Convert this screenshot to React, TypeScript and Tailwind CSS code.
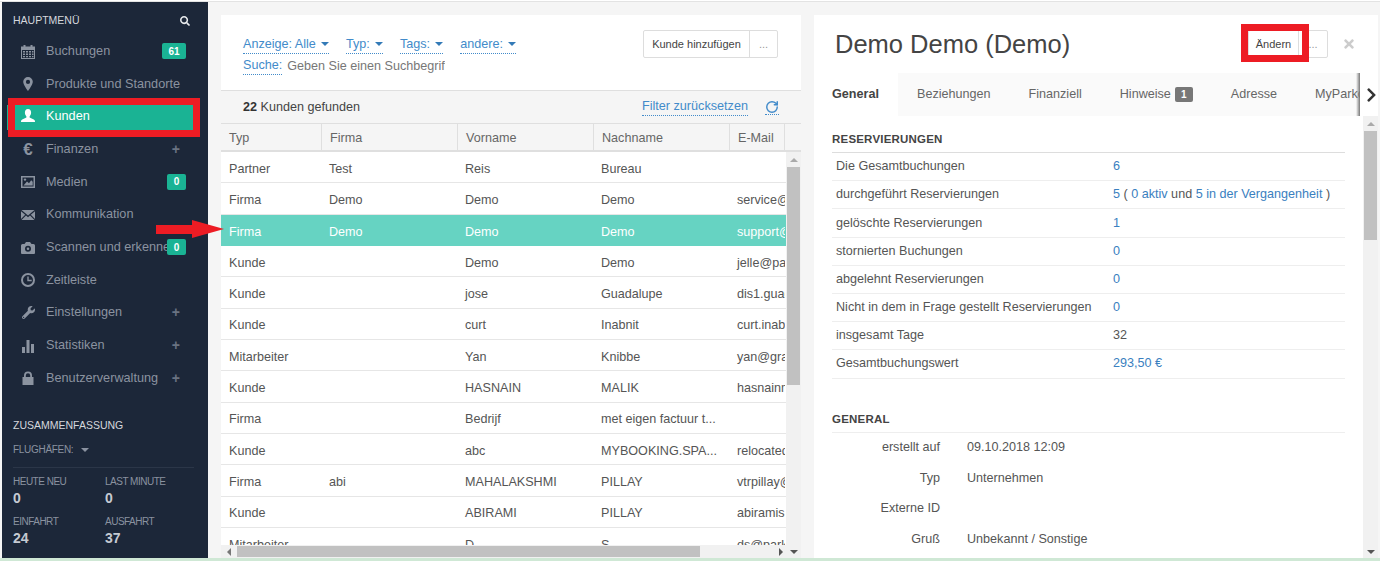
import React from "react";
import { FaWrench, FaSearch, FaChevronRight, FaTimes } from "react-icons/fa";
import { RotateCw } from "lucide-react";

const Ico = ({ children }: { children: React.ReactNode }) => (
  <svg viewBox="0 0 14 14" className="w-[14px] h-[14px]" fill="currentColor">{children}</svg>
);

const Calendar = () => (
  <Ico>
    <path fillRule="evenodd" d="M0 1.5h2.5V0h2v1.5h5V0h2v1.5H14V14H0V1.5ZM1 5v8h12V5H1Z" />
    <path d="M2 6h2v1.5H2zM5 6h2v1.5H5zM8 6h2v1.5H8zM11 6h1.5v1.5H11zM2 8.5h2V10H2zM5 8.5h2V10H5zM8 8.5h2V10H8zM11 8.5h1.5V10H11zM2 11h2v1.3H2zM5 11h2v1.3H5zM8 11h2v1.3H8zM11 11h1.5v1.3H11z" />
  </Ico>
);
const Marker = () => (
  <Ico>
    <path fillRule="evenodd" d="M7 0a4.8 4.8 0 0 1 4.8 4.8C11.8 8 7 14 7 14S2.2 8 2.2 4.8A4.8 4.8 0 0 1 7 0Zm0 2.8a2.1 2.1 0 1 0 0 4.2 2.1 2.1 0 0 0 0-4.2Z" />
  </Ico>
);
const UserIco = () => (
  <Ico>
    <path d="M7 0C4.9 0 3.9 1.6 3.9 3.6c0 1.6.7 3 1.5 3.8v1.2L1.2 10.4C.4 10.8 0 11.5 0 12.4V13h14v-.6c0-.9-.4-1.6-1.2-2L8.6 8.6V7.4c.8-.8 1.5-2.2 1.5-3.8C10.100 1.600 9.100 0 7 0Z" />
  </Ico>
);
const Picture = () => (
  <Ico>
    <path fillRule="evenodd" d="M0 1h14v12H0V1Zm1.500 1.500v9h11v-9h-11Z" />
    <path d="M2.500 10.500 6 6.500l2 1.800 2.200-3 1.500 1.400v3.800z" />
    <circle cx="4" cy="4.600" r="1.200" />
  </Ico>
);
const Mail = () => (
  <Ico>
    <path d="M.5 2h13L7 7.500.5 2ZM0 3.200l4.200 3.600L0 11V3.200ZM14 3.200V11L9.800 6.800 14 3.200ZM5 7.500l2 1.700 2-1.700L13.500 12H.5L5 7.500Z" />
  </Ico>
);
const Camera = () => (
  <Ico>
    <path fillRule="evenodd" d="M1.500 3h2L5 1h4l1.500 2h2A1.500 1.500 0 0 1 14 4.500V12a1 1 0 0 1-1 1H1a1 1 0 0 1-1-1V4.500A1.500 1.500 0 0 1 1.500 3ZM7 4.800a3 3 0 1 0 0 6 3 3 0 0 0 0-6Zm0 1.700a1.300 1.300 0 1 1 0 2.600 1.300 1.300 0 0 1 0-2.600Z" />
  </Ico>
);
const Clock = () => (
  <Ico>
    <path fillRule="evenodd" d="M7 0a7 7 0 1 1 0 14A7 7 0 0 1 7 0Zm0 2a5 5 0 1 0 0 10A5 5 0 0 0 7 2Z" />
    <path d="M6.300 3.500h1.400v3.300h3v1.400H6.300z" />
  </Ico>
);
const Bars = () => (
  <Ico>
    <rect x="1" y="8" width="3" height="6" />
    <rect x="5.500" y="1" width="3" height="13" />
    <rect x="10" y="5" width="3" height="9" />
  </Ico>
);
const Lock = () => (
  <Ico>
    <path fillRule="evenodd" d="M3 6V4.500a4 4 0 0 1 8 0V6h1.500v8h-11V6H3Zm1.800 0h4.400V4.500a2.200 2.200 0 0 0-4.400 0V6Z" />
  </Ico>
);
const Euro = () => <span className="text-[17px] leading-[14px] font-bold">€</span>;

const menu: { label: string; icon: React.ReactNode; badge?: string; plus?: boolean; active?: boolean }[] = [
  { label: "Buchungen", icon: <Calendar />, badge: "61" },
  { label: "Produkte und Standorte", icon: <Marker /> },
  { label: "Kunden", icon: <UserIco />, active: true },
  { label: "Finanzen", icon: <Euro />, plus: true },
  { label: "Medien", icon: <Picture />, badge: "0" },
  { label: "Kommunikation", icon: <Mail /> },
  { label: "Scannen und erkennen", icon: <Camera />, badge: "0" },
  { label: "Zeitleiste", icon: <Clock /> },
  { label: "Einstellungen", icon: <FaWrench className="w-[13px] h-[13px]" />, plus: true },
  { label: "Statistiken", icon: <Bars />, plus: true },
  { label: "Benutzerverwaltung", icon: <Lock />, plus: true },
];

const rows = [
  ["Partner", "Test", "Reis", "Bureau", ""],
  ["Firma", "Demo", "Demo", "Demo", "service@parkos.com"],
  ["Firma", "Demo", "Demo", "Demo", "support@parkos.com"],
  ["Kunde", "", "Demo", "Demo", "jelle@parkos.com"],
  ["Kunde", "", "jose", "Guadalupe", "dis1.guadalupe@x.com"],
  ["Kunde", "", "curt", "Inabnit", "curt.inabnit@x.com"],
  ["Mitarbeiter", "", "Yan", "Knibbe", "yan@graphic.nl"],
  ["Kunde", "", "HASNAIN", "MALIK", "hasnainmalik@x.com"],
  ["Firma", "", "Bedrijf", "met eigen factuur t...", ""],
  ["Kunde", "", "abc", "MYBOOKING.SPA...", "relocated@x.com"],
  ["Firma", "abi", "MAHALAKSHMI", "PILLAY", "vtrpillay@x.com"],
  ["Kunde", "", "ABIRAMI", "PILLAY", "abiramis@x.com"],
  ["Mitarbeiter", "", "D", "S", "ds@parkos.com"],
];

const Caret = ({ c = "border-t-[#337ab7]" }: { c?: string }) => (
  <span className={`inline-block ml-[5px] align-middle w-0 h-0 border-x-[4px] border-x-transparent border-t-[4px] ${c}`} />
);

const Filter = ({ children }: { children: React.ReactNode }) => (
  <span className="text-[#428bca] border-b border-dotted border-[#428bca] leading-[17px] whitespace-nowrap">{children}</span>
);

const A = ({ children }: { children: React.ReactNode }) => <span className="text-[#3a80c0]">{children}</span>;

const stats: [string, React.ReactNode][] = [
  ["Die Gesamtbuchungen", <A>6</A>],
  ["durchgeführt Reservierungen", <><A>5</A> ( <A>0 aktiv</A> und <A>5 in der Vergangenheit</A> )</>],
  ["gelöschte Reservierungen", <A>1</A>],
  ["stornierten Buchungen", <A>0</A>],
  ["abgelehnt Reservierungen", <A>0</A>],
  ["Nicht in dem in Frage gestellt Reservierungen", <A>0</A>],
  ["insgesamt Tage", "32"],
  ["Gesamtbuchungswert", <A>293,50 €</A>],
];

const general: [string, string][] = [
  ["erstellt auf", "09.10.2018 12:09"],
  ["Typ", "Unternehmen"],
  ["Externe ID", ""],
  ["Gruß", "Unbekannt / Sonstige"],
];

const colW = ["w-[101px]", "w-[136px]", "w-[136px]", "w-[136px]", "w-[55px]"];

const Stat = ({ label, value }: { label: string; value: string }) => (
  <div>
    <div className="text-[10px] leading-[12px] tracking-[-0.5px] text-[#8a92a0] whitespace-nowrap">{label}</div>
    <div className="text-[14px] leading-[20px] font-bold text-[#c5cad2]">{value}</div>
  </div>
);

export default function App() {
  return (
    <div className="relative w-[1380px] h-[561px] overflow-hidden bg-[#f5f5f5] flex flex-col text-[12.6px] text-[#555]" style={{ fontFamily: '"Liberation Sans", Arial, sans-serif' }}>
      <div className="h-[2px] shrink-0 bg-white border-b border-[#e3e3e3]" />
      <div className="flex flex-1 min-h-0 pl-[2px]">
        {/* Sidebar */}
        <aside className="w-[206px] shrink-0 bg-[#1c2739] flex flex-col">
          <div className="flex items-center justify-between pl-[11px] pr-[18px] pt-[4px] h-[33.5px] shrink-0">
            <span className="text-[10.5px] text-[#d5d8dd]">HAUPTMENÜ</span>
            <FaSearch className="w-[10px] h-[10px] text-[#e8eaed]" />
          </div>
          <nav className="flex flex-col">
            {menu.map((m) => (
              <div key={m.label} className="h-[32.65px] flex items-center pl-[5px] pr-[15px]">
                <div className={`flex-1 min-w-0 h-[25px] relative flex items-center pl-[14px] ${m.active ? "bg-[#1ab394] text-white mt-[1px] pb-[3px]" : "text-[#8b93a0]"}`}>
                  <span className="w-[14px] flex justify-center shrink-0">{m.icon}</span>
                  <span className="ml-[11px] text-[12.7px] whitespace-nowrap">{m.label}</span>
                  {m.badge && (
                    <span className={`absolute right-[7px] top-[4px] h-[16px] rounded-[2px] bg-[#1ab394] text-white text-[10px] font-bold flex items-center justify-center ${m.badge.length > 1 ? "w-[24px]" : "w-[19px]"}`}>{m.badge}</span>
                  )}
                  {m.plus && <span className="absolute right-[13px] text-[14px] font-bold text-[#6a7382]">+</span>}
                </div>
              </div>
            ))}
          </nav>
          <div className="pl-[11px] pr-[14px] mt-[23px]">
            <div className="text-[10.5px] text-[#d5d8dd] leading-[14px]">ZUSAMMENFASSUNG</div>
            <div className="text-[10px] tracking-[-0.3px] text-[#8a92a0] mt-[12px] leading-[12px]">FLUGHÄFEN: <Caret c="border-t-[#8a92a0]" /></div>
            <div className="border-t border-[#2b3648] mt-[11px] pt-[8px] grid grid-cols-[92px_1fr] gap-y-[8px]">
              <Stat label="HEUTE NEU" value="0" />
              <Stat label="LAST MINUTE" value="0" />
              <Stat label="EINFAHRT" value="24" />
              <Stat label="AUSFAHRT" value="37" />
            </div>
          </div>
        </aside>

        {/* Main */}
        <main className="flex-1 min-w-0 flex gap-[13px] pl-[13px] pr-[2px] pt-[13px]">
          {/* Customer list */}
          <section className="w-[580px] shrink-0 bg-white flex flex-col overflow-hidden">
            <div className="h-[76px] shrink-0 flex justify-between pl-[22px] pr-[23px] pt-[15px] border-b border-[#dfdfdf]">
              <div className="pt-[4px]">
                <div className="flex gap-[17.2px] h-[21px] items-center">
                  <Filter>Anzeige: Alle<Caret /></Filter>
                  <Filter>Typ:<Caret /></Filter>
                  <Filter>Tags:<Caret /></Filter>
                  <Filter>andere:<Caret /></Filter>
                </div>
                <div className="flex gap-[5px] h-[22px] items-center">
                  <Filter>Suche:</Filter>
                  <span className="text-[#777] w-[158px] overflow-hidden whitespace-nowrap">Geben Sie einen Suchbegriff ein</span>
                </div>
              </div>
              <div className="flex h-[28px] border border-[#ddd] rounded-[2px] text-[11px] text-[#444]">
                <span className="w-[106px] flex items-center justify-center border-r border-[#ddd]">Kunde hinzufügen</span>
                <span className="w-[27px] flex items-center justify-center text-[#999]">...</span>
              </div>
            </div>
            <div className="h-[33px] shrink-0 bg-[#f5f5f5] flex items-center justify-between pl-[22px] pr-[22px] border-b border-[#dfdfdf]">
              <span className="text-[#444]"><b className="text-[#333]">22</b> Kunden gefunden</span>
              <div className="flex items-center gap-[17px]">
                <span className="text-[12.65px] inline-flex"><Filter>Filter zurücksetzen</Filter></span>
                <span className="border-b border-dotted border-[#428bca]"><RotateCw className="w-[14px] h-[14px] text-[#428bca]" strokeWidth={2.5} /></span>
              </div>
            </div>
            <div className="h-[28px] shrink-0 flex bg-[#f5f5f5] border-b-2 border-[#dfdfdf] text-[#666]">
              {["Typ", "Firma", "Vorname", "Nachname", "E-Mail"].map((h, i) => (
                <div key={h} className={`${colW[i]} shrink-0 flex items-center pl-[8px] pt-[2px] border-r border-[#dfdfdf]`}>{h}</div>
              ))}
            </div>
            <div className="flex-1 min-h-0 flex">
              <div className="w-[565px] shrink-0 flex flex-col min-h-0 relative">
                <div className="flex-1 min-h-0 overflow-hidden">
                  {rows.map((r, ri) => {
                    const sel = ri === 2;
                    return (
                      <div key={ri} className={`h-[31.33px] flex items-center pt-[4px] ${sel ? "bg-[#66d3c2] text-white" : "border-b border-[#e6e6e6] text-[#555]"}`}>
                        {r.map((c, i) => (
                          <div key={i} className={`${colW[i]} shrink-0 overflow-hidden whitespace-nowrap ${i === 0 ? "pl-[8px]" : "pl-[7px]"}`}>{c}</div>
                        ))}
                      </div>
                    );
                  })}
                </div>
                <div className="h-[13px] shrink-0 bg-[#f1f1f1] flex items-center">
                  <div className="w-[16px] flex justify-center"><span className="w-0 h-0 border-y-[4px] border-y-transparent border-r-[4px] border-r-[#777]" /></div>
                  <div className="w-[463px] h-[11px] bg-[#c1c1c1]" />
                  <div className="flex-1 flex justify-end pr-[3px]"><span className="w-0 h-0 border-y-[4px] border-y-transparent border-l-[4px] border-l-[#555]" /></div>
                </div>
              </div>
              <div className="w-[15px] shrink-0 bg-[#f1f1f1] flex flex-col items-center">
                <div className="h-[15px] flex items-center"><span className="w-0 h-0 border-x-[4px] border-x-transparent border-b-[4px] border-b-[#aaa]" /></div>
                <div className="w-[13px] h-[218px] bg-[#c1c1c1]" />
                <div className="flex-1" />
                <div className="h-[13px] flex items-center"><span className="w-0 h-0 border-x-[4px] border-x-transparent border-t-[4px] border-t-[#555]" /></div>
              </div>
            </div>
          </section>

          {/* Detail */}
          <section className="w-[564px] shrink-0 bg-white flex flex-col overflow-hidden">
            <div className="h-[58px] shrink-0 flex items-center justify-between pl-[21px] pr-[22px]">
              <h1 className="text-[25.5px] text-[#444]">Demo Demo (Demo)</h1>
              <div className="flex items-center gap-[14px] text-[11px]">
                <div className="flex h-[28px] border border-[#ddd] rounded-[2px]">
                  <span className="w-[50px] flex items-center justify-center border-r border-[#ddd] text-[#444]">Ändern</span>
                  <span className="w-[28px] flex items-center justify-center text-[#999]">...</span>
                </div>
                <FaTimes className="w-[14px] h-[14px] text-[#ccc]" />
              </div>
            </div>
            <div className="h-[43px] shrink-0 flex">
              <div className="w-[546px] shrink-0 relative flex items-center overflow-hidden bg-[#fafafa] text-[#666] whitespace-nowrap">
                <span className="w-[84px] shrink-0 h-full bg-white flex items-center pl-[18px] font-bold text-[#444]">General</span>
                <span className="ml-[19px] shrink-0">Beziehungen</span>
                <span className="ml-[38px] shrink-0">Finanziell</span>
                <span className="ml-[38px] shrink-0">Hinweise</span>
                <span className="ml-[4px] shrink-0 w-[18px] h-[15px] rounded-[2px] bg-[#777] text-white text-[10px] font-bold flex items-center justify-center">1</span>
                <span className="ml-[38px] shrink-0">Adresse</span>
                <span className="ml-[38px] shrink-0">MyParkos</span>
                <span className="absolute right-0 top-0 bottom-0 w-[4px] bg-gradient-to-r from-transparent to-[#777]" />
              </div>
              <div className="flex-1 flex items-center justify-end"><FaChevronRight className="w-[13px] h-[16px] text-[#333]" /></div>
            </div>
            <div className="flex-1 min-h-0 flex">
              <div className="flex-1 min-w-0 overflow-hidden pl-[18px] pr-[18px]">
                <h2 className="mt-[16px] text-[11.5px] font-bold text-[#444] leading-[14px] pb-[6px] border-b border-[#ddd] tracking-[0.2px]">RESERVIERUNGEN</h2>
                {stats.map(([l, v]) => (
                  <div key={l} className="h-[28.2px] flex items-center border-b border-[#eee] last:border-b-0 text-[#555]">
                    <span className="w-[281px] pl-[4px] shrink-0 whitespace-nowrap">{l}</span>
                    <span className="whitespace-nowrap">{v}</span>
                  </div>
                ))}
                <h2 className="mt-[33px] text-[11.5px] font-bold text-[#444] leading-[14px] pb-[6px] border-b border-[#eee] tracking-[0.2px]">GENERAL</h2>
                <div>
                  {general.map(([l, v]) => (
                    <div key={l} className="h-[30.5px] flex items-center text-[#555]">
                      <span className="w-[108px] text-right shrink-0">{l}</span>
                      <span className="ml-[27px] whitespace-nowrap">{v}</span>
                    </div>
                  ))}
                </div>
              </div>
              <div className="w-[15px] shrink-0 bg-[#f1f1f1] flex flex-col items-center">
                <div className="h-[15px] flex items-center"><span className="w-0 h-0 border-x-[4px] border-x-transparent border-b-[4px] border-b-[#aaa]" /></div>
                <div className="w-[13px] h-[109px] bg-[#c1c1c1]" />
                <div className="flex-1" />
                <div className="h-[13px] flex items-center"><span className="w-0 h-0 border-x-[4px] border-x-transparent border-t-[4px] border-t-[#555]" /></div>
              </div>
            </div>
          </section>
        </main>
      </div>
      <div className="h-[3px] shrink-0 bg-[#cfe8d5]" />

      {/* Annotations laid over the screenshot */}
      <div className="absolute left-[8px] top-[98px] w-[192px] h-[39px] border-[7px] border-[#ed1c24]" />
      <div className="absolute left-[1241px] top-[24px] w-[68px] h-[38px] border-[7px] border-[#ed1c24]" />
      <svg className="absolute left-[156px] top-[220px] w-[68px] h-[18px]" viewBox="0 0 68 18">
        <polygon points="0,5 36,5 36,0 68,9 36,18 36,14 0,14" fill="#ed1c24" />
      </svg>
    </div>
  );
}
